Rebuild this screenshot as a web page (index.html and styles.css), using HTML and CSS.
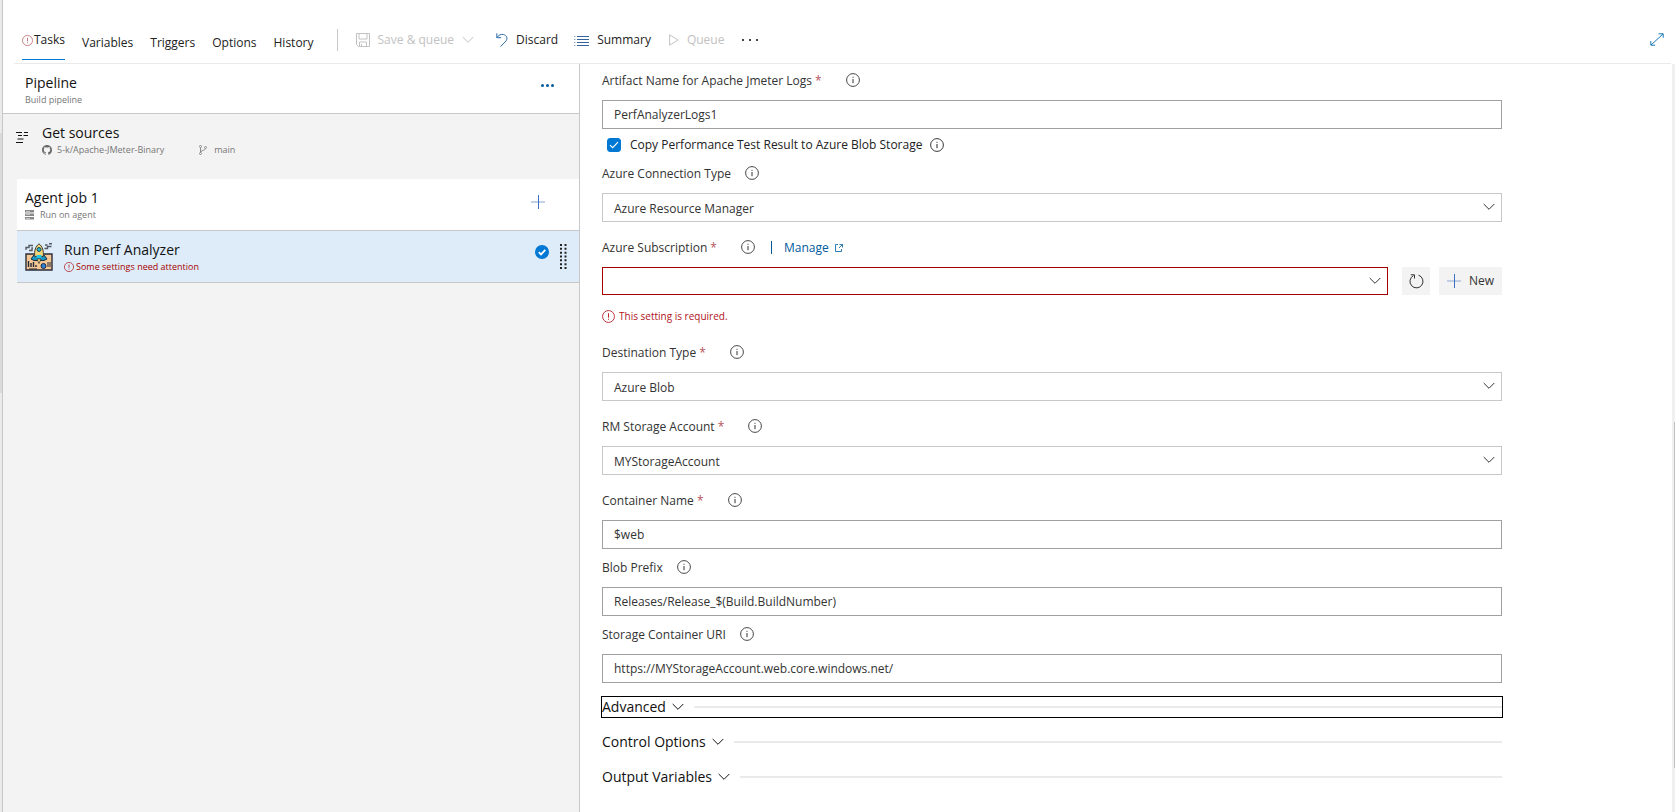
FILE: index.html
```html
<!DOCTYPE html>
<html lang="en">

<head>
  <meta charset="UTF-8">
  <meta name="viewport" content="width=device-width, initial-scale=1.0">
  <title>Edit pipeline</title>
  <link rel="stylesheet" href="styles.css">
</head>

<body>

  <!-- shared icons -->
  <svg class="sprite" aria-hidden="true">
    <symbol id="info" viewBox="0 0 14 14">
      <circle cx="7" cy="7" r="6.4" fill="none" stroke="currentColor" stroke-width="0.9" />
      <path d="M7 6v4.2M7 3.8v1" fill="none" stroke="currentColor" />
    </symbol>
    <symbol id="warn" viewBox="0 0 14 14">
      <circle cx="7" cy="7" r="6.4" fill="none" stroke="currentColor" stroke-width="0.9" />
      <path d="M7 3.5v4.7M7 9.4v1.1" fill="none" stroke="currentColor" />
    </symbol>
    <symbol id="chevron" viewBox="0 0 12 8">
      <path d="M0.7 1l5.3 5.3L11.3 1" fill="none" stroke="currentColor" />
    </symbol>
    <symbol id="plus" viewBox="0 0 14 14">
      <path d="M0 7h14" stroke="#a9bedb" stroke-width="1.4" />
      <path d="M7.5 0v14" stroke="#3f6fc4" />
    </symbol>
  </svg>

  <div class="page">
    <div class="gutter"></div>
    <div class="editor">

      <header class="top_bar">
        <nav class="tabs">
          <a href="#" class="tab active"><svg class="icon_tab"><use href="#warn" /></svg>Tasks</a>
          <a href="#" class="tab">Variables</a>
          <a href="#" class="tab">Triggers</a>
          <a href="#" class="tab">Options</a>
          <a href="#" class="tab">History</a>
        </nav>
        <div class="toolbar">
          <button type="button" class="tool save" disabled>
            <svg width="14" height="14" viewBox="0 0 14 14" fill="none" stroke="currentColor">
              <path d="M0.5 0.5h13v13h-11l-2-2zM3 0.5v5.5h8V0.5M3.5 13.5V9h7v4.5M5.5 11v2.5" />
            </svg>
            <span>Save &amp; queue</span>
            <svg class="chevron"><use href="#chevron" /></svg>
          </button>
          <button type="button" class="tool discard">
            <svg width="12" height="14" viewBox="0 0 12 14" fill="none" stroke="#2f6cab">
              <path d="M0.8 0.3v4.4h4.4M1 4.5C2.6 2 5 0.9 7.6 1.5c3 0.7 4.2 3.8 2.6 6.3L4.6 13.6" />
            </svg>
            <span>Discard</span>
          </button>
          <button type="button" class="tool summary">
            <svg width="15" height="11" viewBox="0 0 15 11" stroke="#33639d">
              <path d="M3 1.5h12M3 4.5h12M3 7.5h12M3 10.5h12" />
              <path d="M0 1.5h1.5M0 4.5h1.5M0 7.5h1.5M0 10.5h1.5" stroke="#8fa9ca" />
            </svg>
            <span>Summary</span>
          </button>
          <button type="button" class="tool queue" disabled>
            <svg width="10" height="12" viewBox="0 0 10 12" fill="none" stroke="currentColor">
              <path d="M0.6 0.8v10.4L9 6z" />
            </svg>
            <span>Queue</span>
          </button>
          <button type="button" class="tool more" aria-label="More actions">
            <svg width="16" height="2" viewBox="0 0 16 2" fill="#444">
              <path d="M0 0h2v2H0zM7 0h2v2H7zM14 0h2v2h-2z" />
            </svg>
          </button>
        </div>
        <button type="button" class="expand" aria-label="Full screen">
          <svg width="14" height="13" viewBox="0 0 14 13" fill="none" stroke="#1c78b8">
            <path d="M1 12L13 1M8.5 0.8h4.7v4M0.8 8v4.2h4.4" />
          </svg>
        </button>
      </header>

      <main class="content">
        <section class="process">
          <div class="pipeline">
            <div>
              <h2>Pipeline</h2>
              <p>Build pipeline</p>
            </div>
            <button type="button" class="pipeline_more" aria-label="Pipeline menu">
              <svg width="13" height="3" viewBox="0 0 13 3" fill="#005a9e">
                <circle cx="1.5" cy="1.5" r="1.5" />
                <circle cx="6.5" cy="1.5" r="1.5" />
                <circle cx="11.5" cy="1.5" r="1.5" />
              </svg>
            </button>
          </div>

          <div class="sources">
            <svg width="12" height="11" viewBox="0 0 12 11" stroke="#111">
              <path d="M0 0.5h6M8 0.5h4M2 3.5h4M7.5 3.5h4.5M1.5 7h6M0 10.5h7" stroke-width="1.1" />
            </svg>
            <div>
              <h2>Get sources</h2>
              <p>
                <svg width="10" height="10" viewBox="0 0 16 16" fill="#6a6a6a">
                  <path d="M8 0C3.58 0 0 3.58 0 8c0 3.54 2.29 6.53 5.47 7.59.4.07.55-.17.55-.38v-1.49c-2.01.37-2.53-.49-2.69-.94-.09-.23-.48-.94-.82-1.13-.28-.15-.68-.52-.01-.53.63-.01 1.08.58 1.23.82.72 1.21 1.87.87 2.33.66.07-.52.28-.87.51-1.07-1.78-.2-3.64-.89-3.64-3.95 0-.87.31-1.59.82-2.15-.08-.2-.36-1.02.08-2.12 0 0 .67-.21 2.2.82a7.5 7.5 0 0 1 4 0c1.53-1.04 2.2-.82 2.2-.82.44 1.1.16 1.92.08 2.12.51.56.82 1.27.82 2.15 0 3.07-1.87 3.75-3.65 3.95.29.25.54.73.54 1.48v2.19c0 .21.15.46.55.38A8 8 0 0 0 16 8c0-4.42-3.58-8-8-8z" />
                </svg>
                <span class="repo">5-k/Apache-JMeter-Binary</span>
                <svg width="8" height="10" viewBox="0 0 8 10" fill="none" stroke="#8a8a8a">
                  <circle cx="1.5" cy="1.5" r="1" />
                  <circle cx="6.5" cy="2.5" r="1" />
                  <circle cx="1.5" cy="8.5" r="1" />
                  <path d="M1.5 2.5v5M6.5 3.5c0 2-4.5 1.5-5 4" />
                </svg>
                <span class="branch">main</span>
              </p>
            </div>
          </div>

          <div class="job">
            <div>
              <h2>Agent job 1</h2>
              <p>
                <svg width="9" height="10" viewBox="0 0 9 10" fill="#888">
                  <path d="M0 0h9v2.5H0zM0 3.5h9V6H0zM0 7h9v2.5H0z" />
                  <path d="M1 1h4v0.6H1zM1 4.5h4v0.6H1zM1 8h4v0.6H1z" fill="#fff" />
                </svg>
                <span>Run on agent</span>
              </p>
            </div>
            <button type="button" class="add_task" aria-label="Add a task">
              <svg width="14" height="14"><use href="#plus" /></svg>
            </button>
          </div>

          <div class="task">
            <!-- rocket over a dashboard -->
            <svg width="28" height="28" viewBox="0 0 28 28">
              <path d="M1 11h26v16H1z" fill="#f5c795" stroke="#2c2c38" stroke-width="1.4" />
              <path d="M1 7V4.5h3V2.5h4M4 7.5h3V5h1M20 2h2.5M24 0.8h3M19.5 5.5h3V3.5h4" fill="none" stroke="#555b66" stroke-width="1.4" />
              <path d="M9 12l-3 4 3 1.5h10l3-1.5-3-4z" fill="#1a94c4" stroke="#15333f" />
              <path d="M14 0.8c-3.5 2.7-5 7-4.2 12.7h8.4C19 7.8 17.5 3.5 14 0.8z" fill="#f4d67a" stroke="#3d3a30" />
              <circle cx="14" cy="6.5" r="2" fill="#20b5d2" stroke="#1b4856" />
              <path d="M11.5 12h5v3h-5z" fill="#27c3df" />
              <path d="M12 16h4l-2 4.5z" fill="#ffe08a" stroke="#3d3a30" stroke-width="0.8" />
              <path d="M3.5 24v-6M6 24v-4M8.5 24v-5M11 24v-2" stroke="#242a3a" stroke-width="1.4" />
              <circle cx="18.5" cy="23" r="2.5" fill="#2f7fd0" stroke="#1d2b49" />
              <path d="M23 19v5M25 19v5M4 26h8" stroke="#242a3a" />
            </svg>
            <div class="task_name">
              <h2>Run Perf Analyzer</h2>
              <p class="error_text"><svg class="icon_small"><use href="#warn" /></svg>Some settings need attention</p>
            </div>
            <svg class="enabled" width="14" height="14" viewBox="0 0 14 14">
              <circle cx="7" cy="7" r="7" fill="#0078d4" />
              <path d="M3.8 7.2l2.2 2.2 4.3-4.5" fill="none" stroke="#fff" stroke-width="1.8" />
            </svg>
            <svg class="grip" width="7" height="25" viewBox="0 0 7 25">
              <path d="M1 0v25M5.5 0v25" stroke="#222" stroke-width="2" stroke-dasharray="2 1.83" />
            </svg>
          </div>
        </section>

        <section class="details">
          <form class="form">
            <div class="field">
              <div class="label_row">
                <label for="artifact">Artifact Name for Apache Jmeter Logs <span class="star">*</span></label>
                <svg class="icon_info"><use href="#info" /></svg>
              </div>
              <input type="text" id="artifact" value="PerfAnalyzerLogs1">
            </div>

            <div class="check_row">
              <input type="checkbox" id="copy" checked>
              <label for="copy">Copy Performance Test Result to Azure Blob Storage</label>
              <svg class="icon_info"><use href="#info" /></svg>
            </div>

            <div class="field pick">
              <div class="label_row optional">
                <label for="connection">Azure Connection Type</label>
                <svg class="icon_info"><use href="#info" /></svg>
              </div>
              <div class="select_box">
                <select id="connection"><option>Azure Resource Manager</option></select>
                <svg class="chevron"><use href="#chevron" /></svg>
              </div>
            </div>

            <div class="field">
              <div class="label_row">
                <label for="subscription">Azure Subscription <span class="star">*</span></label>
                <svg class="icon_info"><use href="#info" /></svg>
                <span class="divider"></span>
                <a href="#" class="manage">Manage
                  <svg width="8" height="8" viewBox="0 0 8 8" fill="none" stroke="currentColor" stroke-width="0.8">
                    <path d="M3 0.5H0.5v7h6V5M4.5 0.5h3v3M7.5 0.5l-3.5 3.5" />
                  </svg>
                </a>
              </div>
              <div class="subscription_row">
                <div class="select_box invalid">
                  <select id="subscription"><option></option></select>
                  <svg class="chevron"><use href="#chevron" /></svg>
                </div>
                <button type="button" class="refresh" aria-label="Refresh">
                  <svg width="15" height="15" viewBox="0 0 15 15" fill="none" stroke="#333">
                    <path d="M9.5 1.2a6.5 6.5 0 1 1-5 0.4M1.8 0.8h3.7v3.7" />
                  </svg>
                </button>
                <button type="button" class="new">
                  <svg width="14" height="14"><use href="#plus" /></svg>
                  New
                </button>
              </div>
              <p class="required_text"><svg class="icon_error"><use href="#warn" /></svg>This setting is required.</p>
            </div>

            <div class="field pick">
              <div class="label_row">
                <label for="destination">Destination Type <span class="star">*</span></label>
                <svg class="icon_info"><use href="#info" /></svg>
              </div>
              <div class="select_box">
                <select id="destination"><option>Azure Blob</option></select>
                <svg class="chevron"><use href="#chevron" /></svg>
              </div>
            </div>

            <div class="field pick">
              <div class="label_row">
                <label for="account">RM Storage Account <span class="star">*</span></label>
                <svg class="icon_info"><use href="#info" /></svg>
              </div>
              <div class="select_box">
                <select id="account"><option>MYStorageAccount</option></select>
                <svg class="chevron"><use href="#chevron" /></svg>
              </div>
            </div>

            <div class="field">
              <div class="label_row">
                <label for="container">Container Name <span class="star">*</span></label>
                <svg class="icon_info"><use href="#info" /></svg>
              </div>
              <input type="text" id="container" value="$web">
            </div>

            <div class="field">
              <div class="label_row optional">
                <label for="prefix">Blob Prefix</label>
                <svg class="icon_info"><use href="#info" /></svg>
              </div>
              <input type="text" id="prefix" value="Releases/Release_$(Build.BuildNumber)">
            </div>

            <div class="field">
              <div class="label_row optional">
                <label for="uri">Storage Container URI</label>
                <svg class="icon_info"><use href="#info" /></svg>
              </div>
              <input type="text" id="uri" value="https://MYStorageAccount.web.core.windows.net/">
            </div>

            <div class="groups">
              <button type="button" class="group focused"><span>Advanced</span><svg class="chevron"><use href="#chevron" /></svg><span class="line"></span></button>
              <button type="button" class="group"><span>Control Options</span><svg class="chevron"><use href="#chevron" /></svg><span class="line"></span></button>
              <button type="button" class="group"><span>Output Variables</span><svg class="chevron"><use href="#chevron" /></svg><span class="line"></span></button>
            </div>
          </form>
          <div class="scroll_track"><div class="scroll_thumb"></div></div>
        </section>
      </main>
    </div>
  </div>

</body>

</html>
```
FILE: styles.css
```css
* {
  box-sizing: border-box;
}

body {
  margin: 0;
  font-family: "Open Sans", "Noto Sans", sans-serif;
  font-size: 12px;
  line-height: 20px;
  color: #333;
  background: #fff;
}

h2, p {
  margin: 0;
  font-weight: normal;
}

button {
  border: none;
  background: none;
  padding: 0;
  font: inherit;
  color: inherit;
  cursor: pointer;
}

svg {
  flex: none;
}

.sprite {
  position: absolute;
  width: 0;
  height: 0;
}

.page {
  display: flex;
  min-height: 100vh;
}

.gutter {
  width: 3px;
  border-right: 1px solid #c8c8c8;
  background: linear-gradient(#eaeaea 133px, #dadada 133px, #dadada 393px, #eaeaea 393px);
}

.editor {
  flex: 1;
  display: flex;
  flex-direction: column;
  min-width: 0;
}

/* top bar */
.top_bar {
  display: flex;
  height: 64px;
  margin: 0 4px 0 11px;
  padding-left: 8px;
  border-bottom: 1px solid #eaeaea;
}

.tabs {
  display: flex;
  gap: 17px;
  padding-top: 28px;
  color: #222;
}

.tab {
  height: 32px;
  padding-top: 5px;
  color: inherit;
  text-decoration: none;
}

.tab.active {
  display: flex;
  align-items: center;
  gap: 1px;
  padding: 0 0 8px;
  border-bottom: 1px solid #0078d4;
  font-weight: 500;
}

.icon_tab {
  width: 11px;
  height: 11px;
  margin-top: 2px;
  color: #b5535a;
}

.toolbar {
  display: flex;
  align-items: center;
  height: 22px;
  margin: 29px 0 0 23px;
  padding-left: 18px;
  border-left: 1px solid #c8c8c8;
  color: #222;
}

.tool {
  display: flex;
  align-items: center;
  gap: 8px;
  margin-right: 18px;
}

.tool:disabled {
  color: #c2c2c2;
}

.tool.save {
  margin-right: 22px;
}

.tool.discard {
  margin-right: 16px;
}

.chevron {
  width: 12px;
  height: 8px;
}

.expand {
  height: 14px;
  margin: 32px 7px 0 auto;
}

/* left side */
.content {
  flex: 1;
  display: flex;
}

.process {
  flex: 0 0 577px;
  border-right: 1px solid #c8c8c8;
  background: #f3f3f3;
}

.process h2 {
  margin-bottom: 2px;
  font-size: 14px;
  line-height: 18px;
  color: #111;
}

.process p {
  display: flex;
  align-items: center;
  font-size: 9px;
  line-height: 12px;
  color: #777;
}

.pipeline {
  display: flex;
  justify-content: space-between;
  height: 50px;
  padding: 10px 25px 0 22px;
  border-bottom: 1px solid #c8c8c8;
  background: #fff;
}

.pipeline_more {
  display: flex;
  height: 23px;
  align-items: center;
}

.sources {
  display: flex;
  align-items: flex-start;
  gap: 14px;
  height: 65px;
  padding: 10px 13px;
}

.sources > svg {
  margin-top: 8px;
}

.repo {
  margin: 0 35px 0 5px;
}

.branch {
  margin-left: 7px;
}

.job {
  display: flex;
  align-items: center;
  justify-content: space-between;
  height: 52px;
  margin-left: 14px;
  padding: 0 34px 0 8px;
  border-bottom: 1px solid #c8c8c8;
  background: #fff;
}

.job p span {
  margin-left: 6px;
}

.add_task {
  height: 26px;
}

.task {
  display: flex;
  align-items: center;
  height: 52px;
  margin-left: 14px;
  padding: 0 12px 0 8px;
  border-bottom: 1px solid #c8c8c8;
  background: #deecf9;
}

.task_name {
  flex: 1;
  margin-left: 11px;
}

.enabled {
  margin-bottom: 9px;
}

.grip {
  margin-left: 11px;
}

.process .error_text {
  color: #a80000;
}

.icon_small {
  width: 10px;
  height: 10px;
  margin-right: 2px;
}

/* right side */
.details {
  flex: 1;
  display: flex;
  justify-content: space-between;
  min-width: 0;
}

.form {
  flex: 1;
  max-width: 922px;
  padding: 6px 0 20px 22px;
}

.field {
  margin-bottom: 8px;
}

.field.pick {
  margin-bottom: 15px;
}

.label_row {
  display: flex;
  align-items: center;
  gap: 24px;
  height: 20px;
  margin-bottom: 10px;
}

.label_row.optional {
  gap: 14px;
}

.label_row label,
.manage {
  padding-top: 2px;
}

.star {
  color: #b5535a;
}

.icon_info {
  width: 14px;
  height: 14px;
}

.form input[type="text"],
.form select {
  display: block;
  width: 100%;
  height: 29px;
  padding: 0 11px;
  border: 1px solid #a0a0a0;
  border-radius: 0;
  background: #fff;
  font: inherit;
  color: inherit;
}

.form select {
  appearance: none;
  padding-top: 2px;
  border-color: #c8c8c8;
}

.select_box {
  position: relative;
  flex: 1;
}

.select_box .chevron {
  position: absolute;
  top: 10px;
  right: 7px;
  pointer-events: none;
}

.form .invalid select {
  height: 28px;
  border-color: #a80000;
}

.check_row {
  display: flex;
  align-items: center;
  height: 16px;
  margin-bottom: 10px;
  padding-left: 5px;
  color: #222;
}

.check_row input {
  appearance: none;
  width: 14px;
  height: 14px;
  margin: 0 9px 0 0;
  border: 1px solid #666;
  border-radius: 3px;
}

.check_row input:checked {
  border-color: #0078d4;
  background: #0078d4 url("data:image/svg+xml,%3Csvg xmlns='http://www.w3.org/2000/svg' viewBox='0 0 12 12'%3E%3Cpath d='M2 6.2l2.7 2.5L10 3.2' fill='none' stroke='white' stroke-width='1.1'/%3E%3C/svg%3E") center / 12px no-repeat;
}

.check_row .icon_info {
  margin-left: 8px;
}

.divider {
  width: 1px;
  height: 13px;
  margin: 0 -12px 0 -8px;
  background: #005a9e;
}

.manage {
  display: flex;
  align-items: center;
  gap: 6px;
  color: #005a9e;
  text-decoration: none;
}

.subscription_row {
  display: flex;
}

.refresh,
.new {
  display: flex;
  align-items: center;
  justify-content: center;
  width: 28px;
  height: 28px;
  margin-left: 14px;
  background: #f3f3f3;
}

.new {
  gap: 8px;
  width: 63px;
  margin-left: 9px;
}

.required_text {
  display: flex;
  align-items: center;
  gap: 4px;
  margin: 11px 0 16px;
  font-size: 10px;
  color: #b1121b;
}

.icon_error {
  width: 13px;
  height: 13px;
}

.groups {
  display: flex;
  flex-direction: column;
  gap: 15px;
  padding-top: 6px;
}

.group {
  display: flex;
  align-items: center;
  gap: 6px;
  height: 20px;
  font-size: 14px;
  color: #111;
}

.group.focused {
  outline: 1px solid #000;
}

.group .line {
  flex: 1;
  height: 2px;
  margin-left: 4px;
  background: #eaeaea;
}

.scroll_track {
  width: 3px;
  padding-top: 358px;
  background: #f0f0f0;
}

.scroll_thumb {
  width: 1px;
  height: 346px;
  margin-left: auto;
  background: #c0c0c0;
}
```
